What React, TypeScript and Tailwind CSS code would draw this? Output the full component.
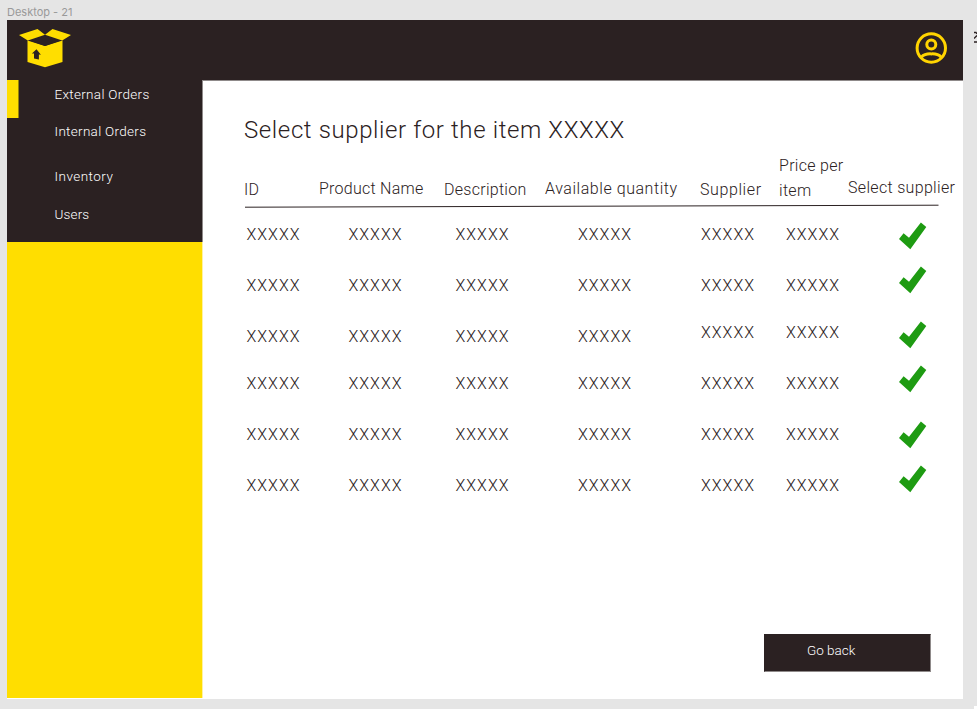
import React from "react";

const nav = [
  { label: "External Orders", cls: "h-[37px] tracking-[0.3px]" },
  { label: "Internal Orders", cls: "h-[45px] tracking-[0.3px]" },
  { label: "Inventory", cls: "h-[38px] tracking-[0.45px]" },
  { label: "Users", cls: "h-[26px] tracking-[0.15px]" },
];

const headers = [
  { label: "ID", cls: "w-[75px] pt-[24px] tracking-[0.3px]" },
  { label: "Product Name", cls: "w-[125px] pt-[23px] tracking-[0.25px]" },
  { label: "Description", cls: "w-[101px] pt-[24px] tracking-[0.28px]" },
  { label: "Available quantity", cls: "w-[155px] pt-[23px] tracking-[0.55px]" },
  { label: "Supplier", cls: "w-[79px] pt-[24px] tracking-[0.6px]" },
  { label: "Price per item", cls: "w-[69px] tracking-[0.3px]" },
  { label: "Select supplier", cls: "w-[112px] pt-[22px] whitespace-nowrap tracking-[0.32px]" },
];

const rows = [
  { cls: "h-[51px]", raised: "" },
  { cls: "h-[51px]", raised: "" },
  { cls: "h-[47px]", raised: "-mt-[4px]" },
  { cls: "h-[51px]", raised: "" },
  { cls: "h-[51px]", raised: "" },
  { cls: "h-[24px]", raised: "" },
];

const checks = ["h-[44px]", "h-[55px]", "h-[44px]", "h-[56px]", "h-[44px]", "h-[28px]"];

function BoxLogo() {
  return (
    <svg width="54" height="40" viewBox="0 0 54 40" className="block">
      <path d="M8.5 12.5 26 18 43.5 12.5V34L26 39.3 8.5 34Z" fill="#ffde00" />
      <path d="M9.5 12.3 26 7 42.5 12.3 26 18Z" fill="#2b2122" />
      <path d="M0 6.9 18.5 1 26 6.7 8.8 12.4Z M52 6.9 33.5 1 26 6.7 43.2 12.4Z" fill="#ffde00" />
      <path d="M17.5 21.2 21.9 26.8 19.9 26.4 19.9 31.6 15 30.4 15 25.6 12.9 25.5Z" fill="#2b2122" />
    </svg>
  );
}

function UserIcon() {
  return (
    <svg width="32" height="32" viewBox="0 0 32 32" fill="none" stroke="#ffd400" strokeWidth="3" className="block">
      <circle cx="16.3" cy="16" r="14.2" />
      <circle cx="16.3" cy="12.5" r="4.5" />
      <path d="M6.500 25C8.800 22.500 12 21.700 16.300 21.900 20.500 21.700 23.800 22.500 26 25" />
    </svg>
  );
}

function Check() {
  return (
    <svg width="28" height="28" viewBox="0 0 28 28" className="block">
      <path d="M0 17 4.600 11.300 10 15.800 21.900 .500 27.300 4.900 11.300 27.200Z" fill="#1e9b12" />
    </svg>
  );
}

export default function App() {
  return (
    <div className="relative h-[709px] w-[977px] overflow-hidden bg-[#e5e5e5] font-['Roboto','Noto_Sans',sans-serif] font-light text-[#2b2122]">
      <div className="h-[20px] pl-[7px] pt-[5px] font-['Inter',sans-serif] text-[11px] font-normal leading-[14px] text-[#999999]">Desktop - 21</div>
      <div className="flex">
        <div className="ml-[7px] h-[679px] w-[956px] shrink-0 bg-white">
          <header className="flex h-[60px] justify-between bg-[#2b2122] pl-[12px] pr-[16px]">
            <div className="pt-[8px]"><BoxLogo /></div>
            <div className="pt-[12px]"><UserIcon /></div>
          </header>
          <div className="flex h-[619px]">
            <aside className="h-[618px] w-[196px] shrink-0 border-r border-[#fff2a0] bg-[#ffde00]">
              <nav className="-mr-px flex h-[162px] border-r border-[#8f8a8a] bg-[#2b2122]">
                <div className="h-[38px] w-[12px] border-r border-[#958308] bg-[#ffde00]" />
                <div className="pl-[35.500px] pt-[4px] text-[13.5px] leading-[20px] text-white">
                  {nav.map((n) => <div key={n.label} className={n.cls}>{n.label}</div>)}
                </div>
              </nav>
            </aside>
            <main className="flex w-[760px] flex-col border-t border-[#8f8a8a] pl-[41px]">
              <h1 className="mt-[34px] h-[38px] text-[24px] font-light leading-[30px] tracking-[0.61px]">Select supplier for the item XXXXX</h1>
              <div className="flex h-[51px] text-[16px] leading-[25px]">
                {headers.map((h) => <div key={h.label} className={`shrink-0 ${h.cls}`}>{h.label}</div>)}
              </div>
              <svg width="695" height="4" viewBox="0 0 695 4" className="block shrink-0">
                <path d="M1 3.200 694.500 1.200" stroke="#2b2122" strokeWidth="1" />
              </svg>
              <div className="flex pl-[2.500px]">
                <div className="w-[652.500px] pt-[15px] text-[16px] leading-[24px] tracking-[1px]">
                  {rows.map((r, i) => (
                    <div key={i} className={`grid grid-cols-[102px_107px_122.500px_123px_85px_1fr] ${r.cls}`}>
                      <span>XXXXX</span>
                      <span>XXXXX</span>
                      <span>XXXXX</span>
                      <span>XXXXX</span>
                      <span className={r.raised}>XXXXX</span>
                      <span className={r.raised}>XXXXX</span>
                    </div>
                  ))}
                </div>
                <div className="pt-[14px]">
                  {checks.map((c, i) => <div key={i} className={c}><Check /></div>)}
                </div>
              </div>
              <button className="mb-[27px] ml-[520px] mt-auto h-[38px] w-[167px] shrink-0 border border-[#8f8a8a] border-l-[#2b2122] border-t-[#2b2122] bg-[#2b2122] pb-[6px] pl-[42px] text-left text-[13.5px] font-light leading-[20px] text-white">Go back</button>
            </main>
          </div>
        </div>
      </div>
      <svg width="3" height="14" viewBox="0 0 3 14" className="absolute right-0 top-[31px]">
        <path d="M0 1.500H2L3 3M3 4.500 0 7.500M0 11H3" stroke="#2b2122" strokeWidth="1.300" fill="none" />
      </svg>
      <div className="absolute bottom-0 right-0 h-[3px] w-[3px] bg-white" />
    </div>
  );
}
